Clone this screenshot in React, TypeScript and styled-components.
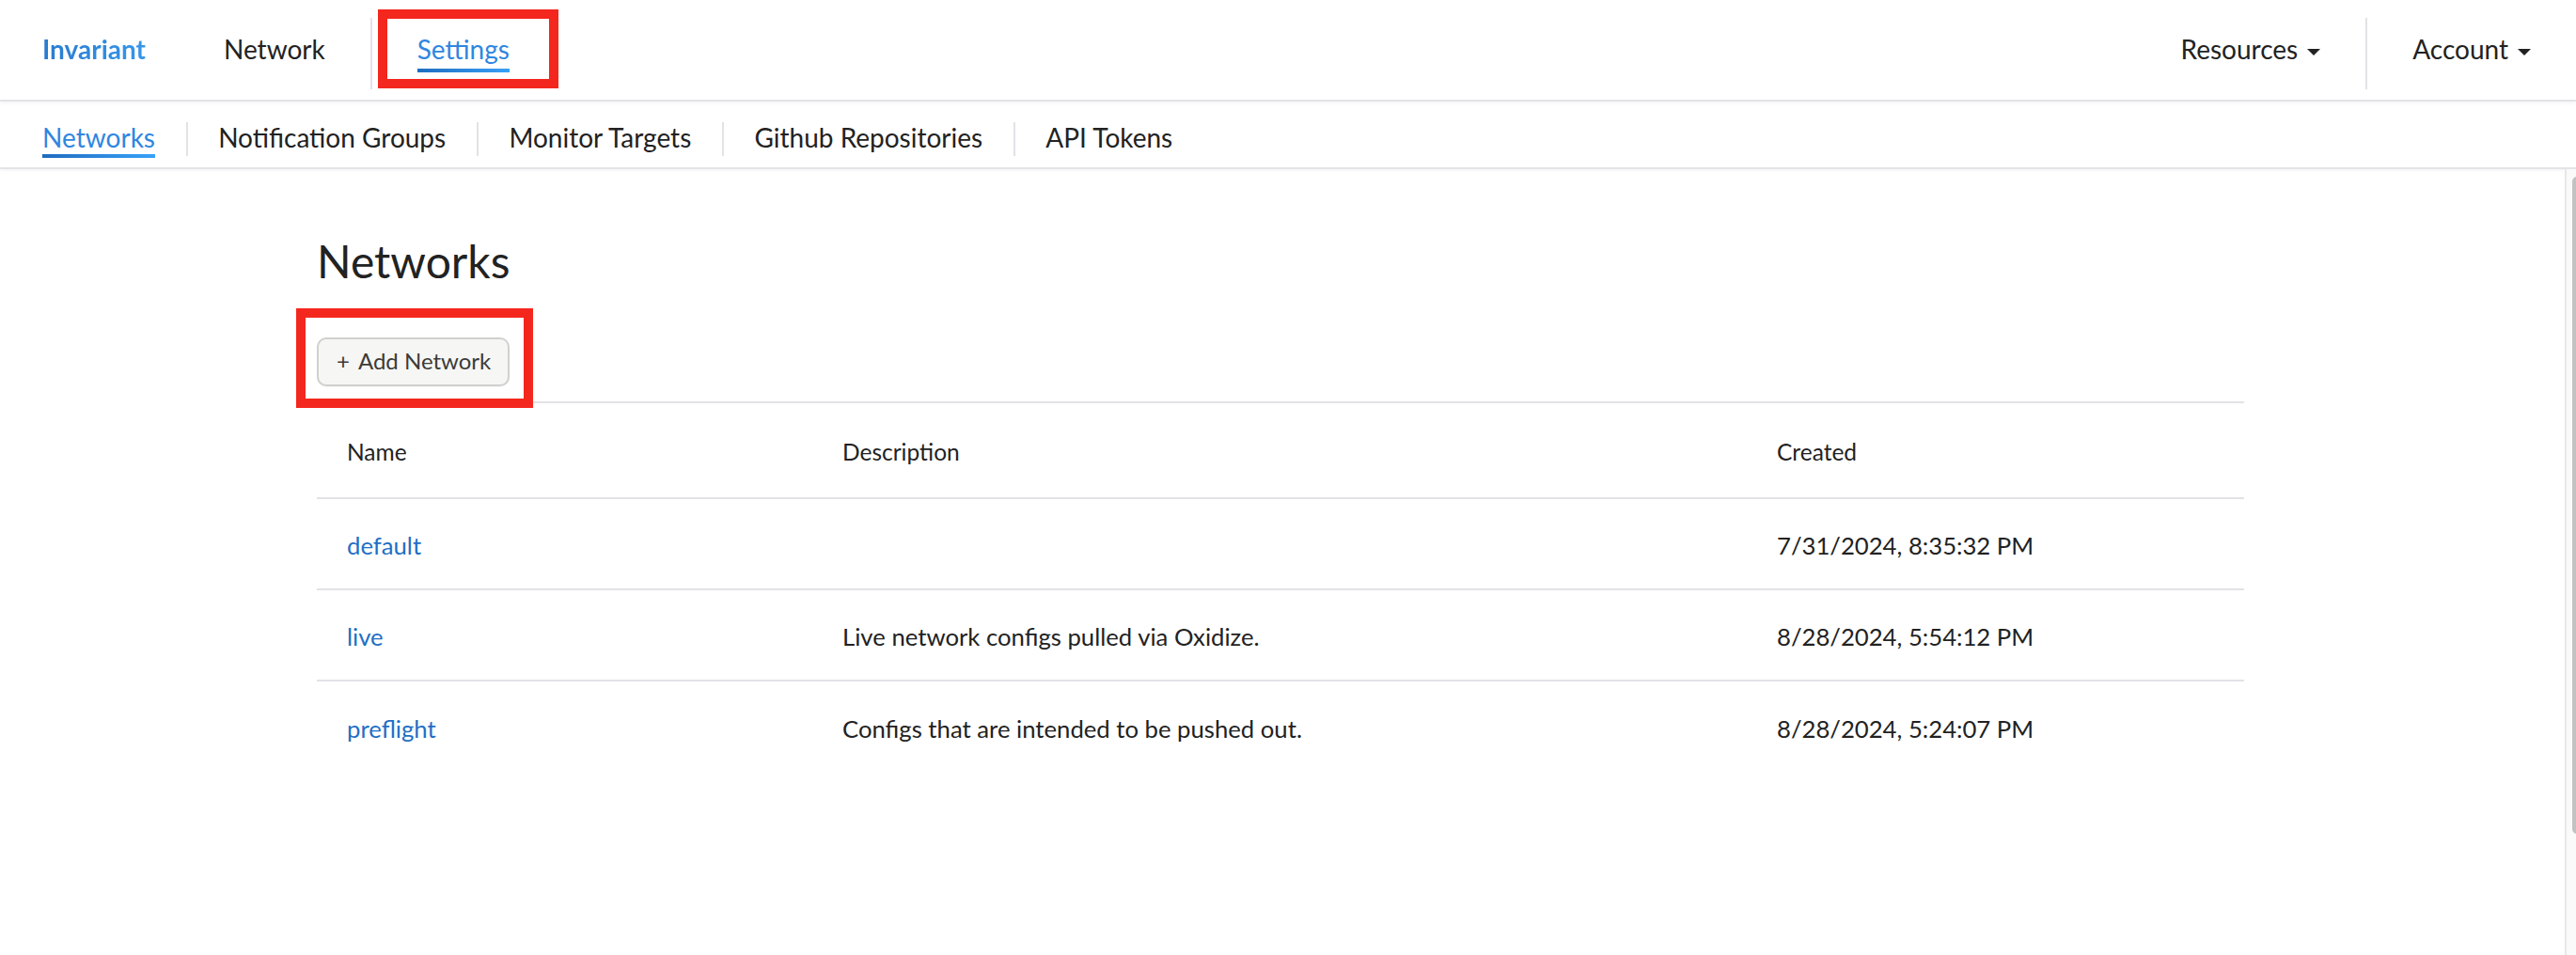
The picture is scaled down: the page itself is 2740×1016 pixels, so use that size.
import styled, { createGlobalStyle } from "styled-components";

const GlobalStyle = createGlobalStyle`
  html, body {
    margin: 0;
    padding: 0;
    background: #ffffff;
    font-family: Lato, "Open Sans", sans-serif;
    color: #222222;
  }

  * {
    box-sizing: border-box;
  }
`;

const Page = styled.div`
  height: 100vh;
  display: flex;
  flex-direction: column;
  overflow: hidden;
`;

const TopBar = styled.header`
  height: 108px;
  flex: none;
  display: flex;
  align-items: center;
  padding-top: 7px;
  border-bottom: 2px solid #e3e3e8;
  box-shadow: 0 2px 3px rgba(0, 0, 0, 0.04);
`;

const Brand = styled.a`
  padding: 0 35px 7px 45px;
  font-size: 28px;
  line-height: 1.2;
  font-weight: 700;
  background: linear-gradient(90deg, #2270c6, #3c9ff0);
  -webkit-background-clip: text;
  background-clip: text;
  color: transparent;
  text-decoration: none;
`;

const NavItem = styled.a<{ $gap: number }>`
  position: relative;
  height: 100%;
  display: flex;
  align-items: center;
  padding: 0 ${(p) => p.$gap}px;
  text-decoration: none;
  cursor: pointer;
`;

const NavLabel = styled.span<{ $active?: boolean; $pad: number }>`
  display: inline-flex;
  align-items: center;
  font-size: 28px;
  line-height: 1.2;
  padding-bottom: ${(p) => p.$pad}px;
  border-bottom: 4px solid transparent;
  border-image: ${(p) => (p.$active ? "linear-gradient(90deg, #1f6cbf, #38a2f8) 1" : "none")};
  color: ${(p) => (p.$active ? "#2f86e0" : "#222222")};
  white-space: nowrap;
`;

const Caret = styled.span`
  width: 0;
  height: 0;
  margin-left: 10px;
  margin-top: 4px;
  border-left: 7px solid transparent;
  border-right: 7px solid transparent;
  border-top: 7px solid #222222;
`;

const BarDivider = styled.span<{ $height: number }>`
  flex: none;
  width: 2px;
  height: ${(p) => p.$height}px;
  background: #e2e2e7;
`;

const Spacer = styled.div`
  flex: 1;
`;

/* red annotation frame drawn over a control */
const Callout = styled.span<{ $top: number; $right: number; $bottom: number; $left: number }>`
  position: absolute;
  top: ${(p) => p.$top}px;
  right: ${(p) => p.$right}px;
  bottom: ${(p) => p.$bottom}px;
  left: ${(p) => p.$left}px;
  border: 10px solid #f4271e;
  pointer-events: none;
`;

const SubBar = styled.nav`
  height: 72px;
  flex: none;
  display: flex;
  align-items: flex-end;
  padding: 0 0 10px 12.5px;
  border-bottom: 2px solid #e3e3e8;
  box-shadow: 0 2px 3px rgba(0, 0, 0, 0.04);

  ${BarDivider} {
    margin-bottom: 2px;
  }
`;

const SubItem = styled.a`
  display: flex;
  padding: 0 32.6px;
  text-decoration: none;
  cursor: pointer;
`;

const Body = styled.div`
  flex: 1;
  display: flex;
  min-height: 0;
`;

const Main = styled.main`
  flex: 1;
  min-width: 0;
`;

const ScrollTrack = styled.div`
  flex: none;
  width: 12px;
  border-left: 2px solid #e8e8e8;
  background: #fafafa;
  padding: 8px 0 0 6px;
`;

const ScrollThumb = styled.div`
  width: 8px;
  height: 699px;
  border-radius: 5px 0 0 5px;
  background: #c2c2c2;
`;

const Container = styled.div`
  width: 2050px;
  margin: 0 auto;
  padding-top: 69px;
  transform: translateX(-2px);
`;

const Title = styled.h1`
  margin: 0 0 52px;
  font-size: 48px;
  line-height: 1.2;
  font-weight: 400;
  color: #222222;
`;

const Toolbar = styled.div`
  display: flex;
  margin-bottom: 16px;
`;

const ButtonWrap = styled.div`
  position: relative;
  display: inline-flex;
`;

const Button = styled.button`
  height: 52px;
  display: inline-flex;
  align-items: center;
  gap: 9px;
  padding: 0 18px 0 19px;
  border: 2px solid #d0d0cd;
  border-radius: 10px;
  background: #f6f6f4;
  color: #3b3b38;
  font-family: Lato, sans-serif;
  font-size: 24px;
  line-height: 1.2;
  box-shadow: 0 1px 1px rgba(0, 0, 0, 0.04);
  cursor: pointer;
`;

const Table = styled.div`
  border-top: 2px solid #e2e2e7;
`;

const Row = styled.div<{ $height: number; $last?: boolean }>`
  display: grid;
  grid-template-columns: 527px 994px 1fr;
  align-items: center;
  height: ${(p) => p.$height}px;
  padding-top: 5px;
  border-bottom: ${(p) => (p.$last ? "none" : "2px solid #e2e2e7")};
`;

const Cell = styled.div<{ $head?: boolean }>`
  padding: 0 32px;
  font-size: ${(p) => (p.$head ? 24.5 : 25.7)}px;
  line-height: 1.2;
  color: #222222;
  white-space: nowrap;
`;

const NameLink = styled.a`
  color: #1f6fc5;
  text-decoration: none;
  cursor: pointer;
`;

const networks = [
  { name: "default", description: "", created: "7/31/2024, 8:35:32 PM" },
  { name: "live", description: "Live network configs pulled via Oxidize.", created: "8/28/2024, 5:54:12 PM" },
  { name: "preflight", description: "Configs that are intended to be pushed out.", created: "8/28/2024, 5:24:07 PM" },
];

const subTabs = ["Networks", "Notification Groups", "Monitor Targets", "Github Repositories", "API Tokens"];

const App = () => {
  return (
    <>
      <GlobalStyle />
      <Page>
        <TopBar>
          <Brand>Invariant</Brand>
          <NavItem $gap={48}>
            <NavLabel $pad={3}>Network</NavLabel>
          </NavItem>
          <BarDivider $height={76} />
          <NavItem $gap={48}>
            <NavLabel $pad={3} $active>
              Settings
            </NavLabel>
            <Callout $top={3} $right={-4} $bottom={12} $left={6} />
          </NavItem>
          <Spacer />
          <NavItem $gap={48}>
            <NavLabel $pad={3}>
              Resources
              <Caret />
            </NavLabel>
          </NavItem>
          <BarDivider $height={76} />
          <NavItem $gap={48}>
            <NavLabel $pad={3}>
              Account
              <Caret />
            </NavLabel>
          </NavItem>
        </TopBar>

        <SubBar>
          {subTabs.map((tab, i) => (
            <>
              {i > 0 && <BarDivider key={`d-${tab}`} $height={36} />}
              <SubItem key={tab}>
                <NavLabel $pad={0} $active={i === 0}>
                  {tab}
                </NavLabel>
              </SubItem>
            </>
          ))}
        </SubBar>

        <Body>
          <Main>
            <Container>
              <Title>Networks</Title>
              <Toolbar>
                <ButtonWrap>
                  <Button>
                    <span>+</span>
                    <span>Add Network</span>
                  </Button>
                  <Callout $top={-31} $right={-25} $bottom={-23} $left={-22} />
                </ButtonWrap>
              </Toolbar>
              <Table>
                <Row $height={102}>
                  <Cell $head>Name</Cell>
                  <Cell $head>Description</Cell>
                  <Cell $head>Created</Cell>
                </Row>
                {networks.map((n, i) => (
                  <Row key={n.name} $height={97} $last={i === networks.length - 1}>
                    <Cell>
                      <NameLink>{n.name}</NameLink>
                    </Cell>
                    <Cell>{n.description}</Cell>
                    <Cell>{n.created}</Cell>
                  </Row>
                ))}
              </Table>
            </Container>
          </Main>
          <ScrollTrack>
            <ScrollThumb />
          </ScrollTrack>
        </Body>
      </Page>
    </>
  );
};

export default App;
